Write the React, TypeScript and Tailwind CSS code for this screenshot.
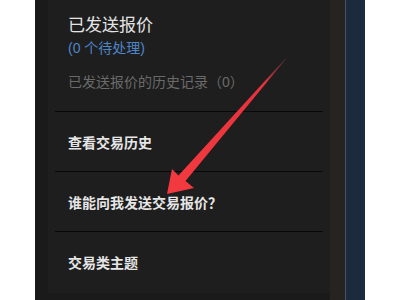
import React from "react";

const font = { fontFamily: '"Liberation Sans", "Noto Sans CJK SC", sans-serif' };

function Arrow() {
  return (
    <svg
      className="absolute left-0 top-0 pointer-events-none"
      width="400"
      height="300"
      viewBox="0 0 400 300"
    >
      <defs>
        <linearGradient id="shaft" x1="286" y1="59" x2="180" y2="180" gradientUnits="userSpaceOnUse">
          <stop offset="0" stopColor="#b0404a" stopOpacity="0.3" />
          <stop offset="0.2" stopColor="#e8323c" />
          <stop offset="1" stopColor="#f2393f" />
        </linearGradient>
      </defs>
      <polygon
        points="286,59 185.5,181 194,188 167,194 172,169 178.5,175.5 285,59"
        fill="url(#shaft)"
      />
    </svg>
  );
}

export default function App() {
  return (
    <div className="relative w-[400px] h-[300px] bg-white flex overflow-hidden" style={font}>
      <div className="w-[35px] shrink-0 bg-white" />
      <div className="w-[295px] shrink-0 h-full bg-[#1a1a1a] pl-[13px]">
        <div className="w-[282px] h-[293px] bg-[#1e1e1e] px-[7px]">
          <div className="pt-[16px] pb-[19px] pl-[13px] border-b border-[#080808]">
            <div className="text-[17px] leading-[20px] text-[#e4e4e4]">已发送报价</div>
            <div className="mt-[2px] text-[14px] leading-[20px] text-[#4f86c9]">(0 个待处理)</div>
            <div className="mt-[14px] text-[14px] leading-[20px] text-[#6a6a6a]">已发送报价的历史记录（0）</div>
          </div>
          <div className="h-[60px] flex items-center pt-[3px] pl-[13px] border-b border-[#080808] text-[14px] font-bold text-[#e6e6e6]">
            查看交易历史
          </div>
          <div className="h-[60px] flex items-center pt-[3px] pl-[13px] border-b border-[#080808] text-[14px] font-bold text-[#e6e6e6]">
            谁能向我发送交易报价？
          </div>
          <div className="h-[59px] flex items-center pt-[3px] pl-[13px] text-[14px] font-bold text-[#e6e6e6]">
            交易类主题
          </div>
        </div>
      </div>
      <div className="w-[15px] shrink-0 h-full bg-[#262421]" />
      <div className="w-px shrink-0 h-full bg-[#4a5362]" />
      <div className="w-[19px] shrink-0 h-full bg-[#1b2a3c]" />
      <div className="flex-1 bg-white" />
      <Arrow />
    </div>
  );
}
